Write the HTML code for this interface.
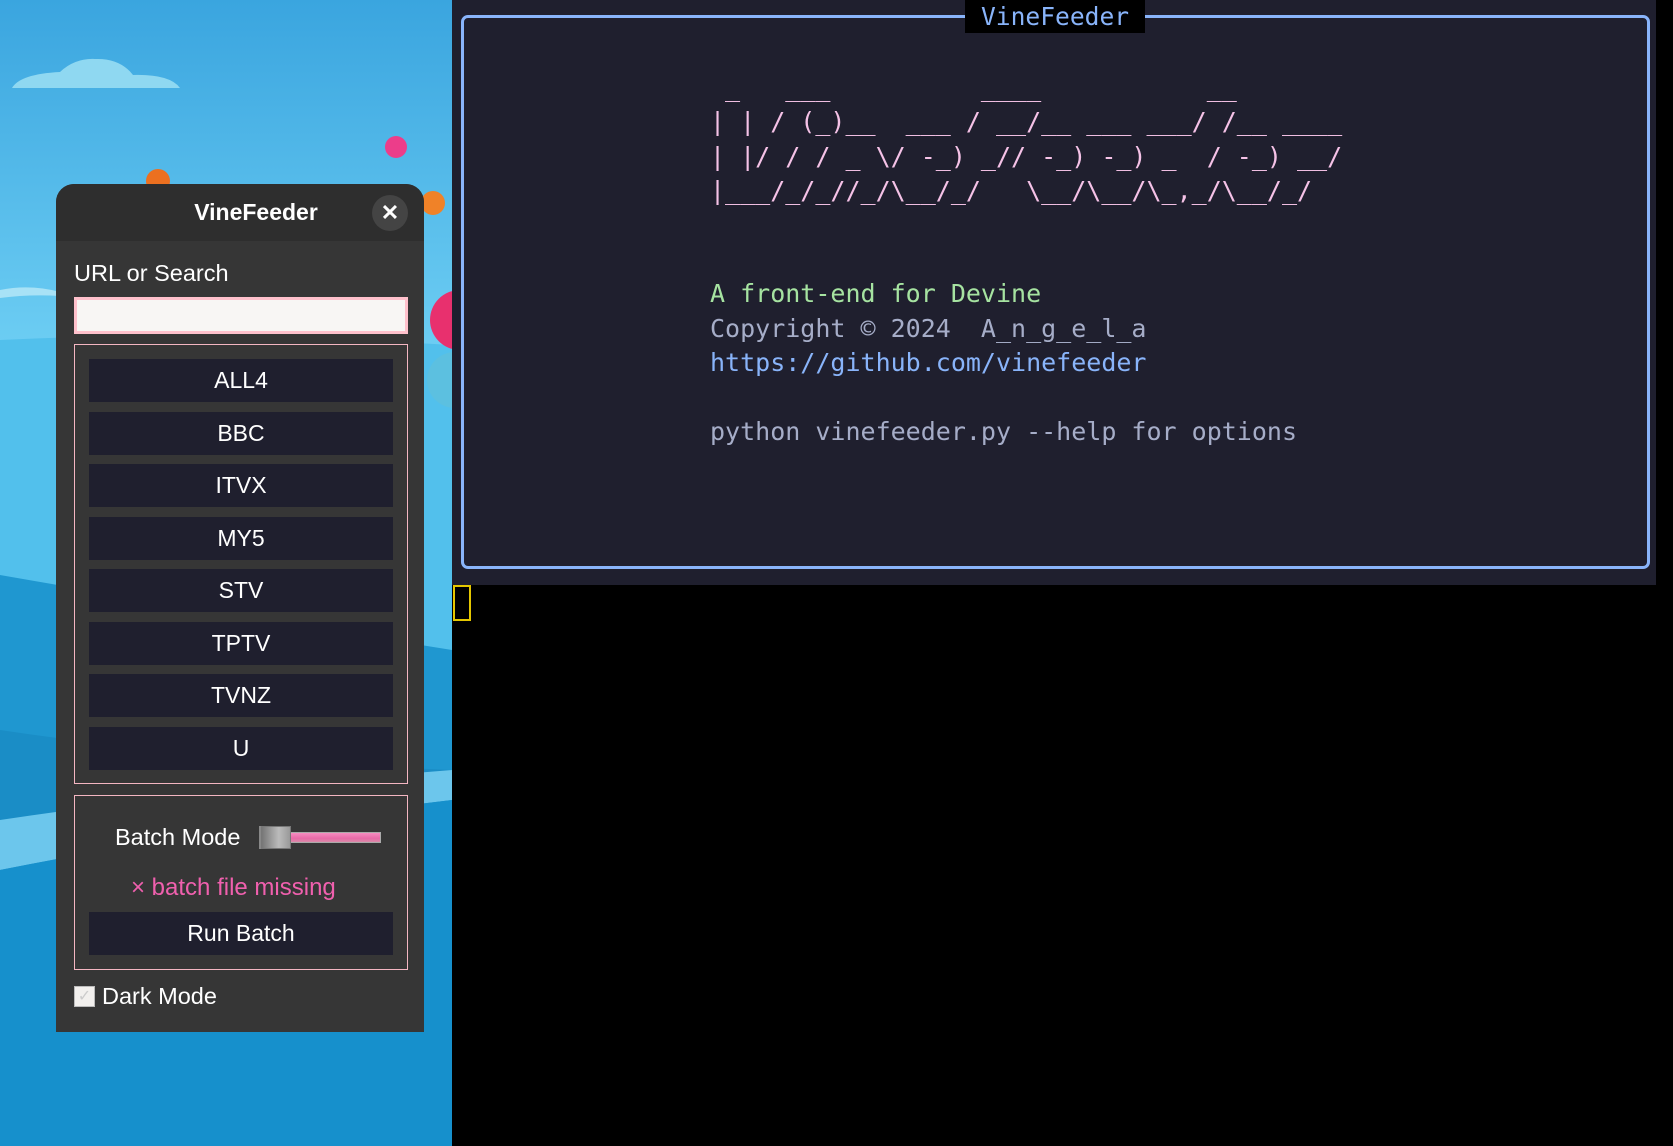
<!DOCTYPE html>
<html><head><meta charset="utf-8"><style>
*{margin:0;padding:0;box-sizing:border-box}
body{width:1673px;height:1146px;background:#000;position:relative;overflow:hidden;font-family:"Liberation Sans",sans-serif}
.abs{position:absolute}
#desk{left:0;top:0;width:452px;height:1146px}
#term{left:452px;top:0;width:1204px;height:585px;background:#1f1f2e}
#box{left:461px;top:15px;width:1189px;height:554px;border:3px solid #89b4fa;border-radius:7px}
#ttl{left:965px;top:0;width:180px;height:33px;background:#000;color:#89b4fa;font:24.6px/33px "DejaVu Sans Mono","Liberation Mono",monospace;padding-left:16px}
pre{position:absolute;left:710px;top:71px;font:25px/34.4px "DejaVu Sans Mono","Liberation Mono",monospace;color:#a6adc8;white-space:pre}
.p{color:#f5c2e7}.g{color:#a6e3a1}.b{color:#89b4fa}
#cur{left:453px;top:585px;width:18px;height:36px;border:2px solid #e5c700}
#panel{left:56px;top:184px;width:368px;height:848px;background:#363636;border-radius:18px 18px 0 0;overflow:hidden}
#tb{left:0;top:0;width:368px;height:57px;background:#2e2e2e;color:#fff;font-weight:bold;font-size:23px;text-align:center;line-height:57px;padding-left:32px}
#close{left:316px;top:11px;width:36px;height:36px;border-radius:50%;background:#444;color:#fff;font-size:22px;line-height:36px;text-align:center;font-weight:bold}
.lbl{color:#fff;font-size:23.5px}
.btn{position:absolute;left:33px;width:304px;height:43px;background:#1f1f2e;color:#fff;font-size:23px;line-height:43px;text-align:center}
</style></head><body>
<svg id="desk" class="abs" width="452" height="1146" viewBox="0 0 452 1146">
<defs><linearGradient id="sky" x1="0" y1="0" x2="0" y2="1"><stop offset="0" stop-color="#3aa5df"/><stop offset="0.3" stop-color="#6ccdf3"/><stop offset="0.45" stop-color="#78d6f6"/></linearGradient></defs>
<rect width="452" height="1146" fill="url(#sky)"/>
<path d="M12 88 Q20 74 60 72 Q75 58 95 59 Q120 58 133 75 Q170 74 180 88Z" fill="#8fd8f1"/>
<path d="M0 290 Q30 284 60 292 L60 296 Q30 294 0 298Z" fill="#a8e2f6"/>
<path d="M0 340 Q200 330 452 345 L452 1146 L0 1146Z" fill="#52c0ec"/>
<path d="M0 575 Q200 610 452 650 L452 1146 L0 1146Z" fill="#1f97d0"/>
<path d="M0 730 Q200 760 452 770 L452 1146 L0 1146Z" fill="#1a8dc6"/>
<path d="M0 820 Q200 790 452 770 L452 800 Q200 830 0 870Z" fill="#6cc6ec"/>
<path d="M0 870 Q200 830 452 800 L452 1146 L0 1146Z" fill="#1690cc"/>
<circle cx="396" cy="147" r="11" fill="#ec3d8a"/>
<circle cx="158" cy="181" r="12" fill="#ec7020"/>
<circle cx="433" cy="203" r="12" fill="#f08228"/>
<circle cx="460" cy="320" r="30" fill="#e8306e"/>
<ellipse cx="455" cy="380" rx="28" ry="28" fill="#5cc0e0"/>
</svg>
<div id="term" class="abs"></div>
<div id="box" class="abs"></div>
<div id="ttl" class="abs">VineFeeder</div>
<pre><span class="p"> _   ___          ____           __
| | / (_)__  ___ / __/__ ___ ___/ /__ ____
| |/ / / _ \/ -_) _// -_) -_) _  / -_) __/
|___/_/_//_/\__/_/   \__/\__/\_,_/\__/_/</span>


<span class="g">A front-end for Devine</span>
Copyright © 2024  A_n_g_e_l_a
<span class="b">https://github.com/vinefeeder</span>

python vinefeeder.py --help for options</pre>
<div id="cur" class="abs"></div>
<div id="panel" class="abs">
<div id="tb" class="abs">VineFeeder</div>
<div id="close" class="abs">✕</div>
<div class="abs lbl" style="left:18px;top:76px">URL or Search</div>
<div class="abs" style="left:18px;top:113px;width:334px;height:37px;background:#f8f6f4;border:3px solid #ffc1cc"></div>
<div class="abs" style="left:18px;top:160px;width:334px;height:440px;border:1.5px solid #f4b6c2">
<div class="btn" style="left:14px;top:14px">ALL4</div>
<div class="btn" style="left:14px;top:66.5px">BBC</div>
<div class="btn" style="left:14px;top:119px">ITVX</div>
<div class="btn" style="left:14px;top:171.5px">MY5</div>
<div class="btn" style="left:14px;top:224px">STV</div>
<div class="btn" style="left:14px;top:276.5px">TPTV</div>
<div class="btn" style="left:14px;top:329px">TVNZ</div>
<div class="btn" style="left:14px;top:381.5px">U</div>
</div>
<div class="abs" style="left:18px;top:611px;width:334px;height:175px;border:1.5px solid #f4b6c2">
<div class="abs lbl" style="left:40px;top:28px">Batch Mode</div>
<div class="abs" style="left:186px;top:36px;width:120px;height:11px;background:linear-gradient(#f58cc0,#e86aa8 60%,#d98aa8);border:1px solid #aaa"></div>
<div class="abs" style="left:184px;top:30px;width:3px;height:23px;background:#888"></div>
<div class="abs" style="left:186px;top:30px;width:30px;height:23px;background:linear-gradient(90deg,#777,#bbb 60%,#999);border:1px solid #777"></div>
<div class="abs" style="left:56px;top:78px;color:#f060ae;font-size:24px">× batch file missing</div>
<div class="btn" style="left:14px;top:116px">Run Batch</div>
</div>
<div class="abs" style="left:18px;top:802px;width:21px;height:21px;background:#f2f0ee;border:1px solid #bbb;color:#ccc;font-size:16px;line-height:20px;text-align:center">✓</div>
<div class="abs lbl" style="left:46px;top:799px">Dark Mode</div>
</div>
</body></html>
